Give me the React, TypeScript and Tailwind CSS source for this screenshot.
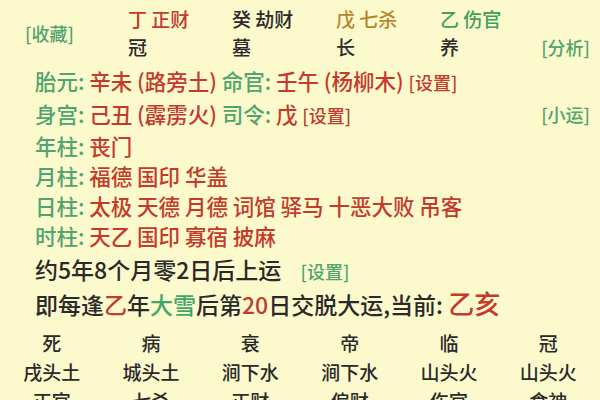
import React from 'react'

const RED = 'text-[#c23b2c]'
const GREEN = 'text-[#4fa56f]'

const gods = [
  { stem: '丁', god: '正财', stage: '冠', color: 'text-[#c23b2c]' },
  { stem: '癸', god: '劫财', stage: '墓', color: 'text-[#2a2a2a]' },
  { stem: '戊', god: '七杀', stage: '长', color: 'text-[#b5862f]' },
  { stem: '乙', god: '伤官', stage: '养', color: 'text-[#3f9f5c]' },
]

const pillars = [
  { label: '年柱', stars: '丧门' },
  { label: '月柱', stars: '福德 国印 华盖' },
  { label: '日柱', stars: '太极 天德 月德 词馆 驿马 十恶大败 吊客' },
  { label: '时柱', stars: '天乙 国印 寡宿 披麻' },
]

const luck = [
  ['死', '戌头土', '正官'],
  ['病', '城头土', '七杀'],
  ['衰', '涧下水', '正财'],
  ['帝', '涧下水', '偏财'],
  ['临', '山头火', '伤官'],
  ['冠', '山头火', '食神'],
]

function Label({ children }: { children: React.ReactNode }) {
  return <span className={GREEN}>{children}: </span>
}

export default function App() {
  return (
    <div
      className="w-[600px] h-[400px] overflow-hidden bg-[#fcf9cd] text-[#2a2a2a] text-[19px] font-medium whitespace-nowrap"
      style={{ fontFamily: '"Noto Sans CJK SC", "Noto Sans", sans-serif' }}
    >
      {/* header: stems + growth stages */}
      <div className="flex items-center pt-[5px] pl-[25px] pr-[10px]">
        <span className={`text-[18px] w-[103px] shrink-0 ${GREEN}`}>[收藏]</span>
        {gods.map(g => (
          <div key={g.stem} className="w-[104px] shrink-0 last-of-type:w-auto leading-[28px]">
            <div className={g.color}>{g.stem} {g.god}</div>
            <div>{g.stage}</div>
          </div>
        ))}
        <span className={`ml-auto self-end leading-[28px] text-[18px] ${GREEN}`}>[分析]</span>
      </div>

      <div className="pl-[35px] pr-[10px] pt-[4px] text-[21.5px]">
        <div className="leading-[32px]">
          <Label>胎元</Label>
          <span className={RED}>辛未 (路旁土) </span>
          <Label>命官</Label>
          <span className={RED}>壬午 (杨柳木) </span>
          <span className={`text-[18px] ${RED}`}>[设置]</span>
        </div>
        <div className="flex items-center leading-[31px]">
          <div>
            <Label>身宫</Label>
            <span className={RED}>己丑 (霹雳火) </span>
            <Label>司令</Label>
            <span className={RED}>戊 </span>
            <span className={`text-[18px] ${RED}`}>[设置]</span>
          </div>
          <span className={`ml-auto text-[18px] ${GREEN}`}>[小运]</span>
        </div>
        {pillars.map(p => (
          <div key={p.label} className="leading-[30px]">
            <Label>{p.label}</Label>
            <span className={RED}>{p.stars}</span>
          </div>
        ))}
        <div className="mt-[2px] leading-[32px] text-[23px]">
          约5年8个月零2日后上运 <span className={`ml-[14px] text-[18px] ${GREEN}`}>[设置]</span>
        </div>
        <div className="leading-[32px] text-[23px]">
          即每逢<span className={RED}>乙</span>年<span className="text-[#3fa868]">大雪</span>后第
          <span className={RED}>20</span>日交脱大运,当前: <span className={`text-[26px] ${RED}`}>乙亥</span>
        </div>
      </div>

      {/* luck pillars grid */}
      <div className="grid grid-cols-6 px-[2px] pt-[8px] text-center leading-[29px]">
        {luck.map(col => (
          <div key={col[1] + col[0]} className="flex flex-col">
            {col.map((t, i) => (
              <span key={i}>{t}</span>
            ))}
          </div>
        ))}
      </div>
    </div>
  )
}
